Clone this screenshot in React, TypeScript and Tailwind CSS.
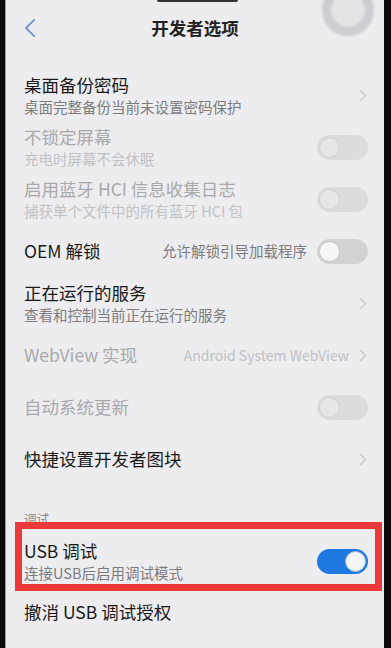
const font = { fontFamily: '"Noto Sans CJK SC", "Noto Sans", sans-serif' }

type Row = {
  title: string
  sub?: string
  right?: string
  kind: "chevron" | "toggle" | "none"
  disabled?: boolean
  on?: boolean
}

const rows: Row[] = [
  { title: "桌面备份密码", sub: "桌面完整备份当前未设置密码保护", kind: "chevron" },
  { title: "不锁定屏幕", sub: "充电时屏幕不会休眠", kind: "toggle", disabled: true },
  { title: "启用蓝牙 HCI 信息收集日志", sub: "捕获单个文件中的所有蓝牙 HCI 包", kind: "toggle", disabled: true },
  { title: "OEM 解锁", right: "允许解锁引导加载程序", kind: "toggle" },
  { title: "正在运行的服务", sub: "查看和控制当前正在运行的服务", kind: "chevron" },
  { title: "WebView 实现", right: "Android System WebView", kind: "chevron", disabled: true },
  { title: "自动系统更新", kind: "toggle", disabled: true },
  { title: "快捷设置开发者图块", kind: "chevron" },
]

function Chevron() {
  return (
    <svg width="8" height="13" viewBox="0 0 8 13" className="shrink-0">
      <path d="M1.5 1.5 L6.5 6.5 L1.5 11.5" fill="none" stroke="#c9c9cc" strokeWidth="1.4" strokeLinecap="round" strokeLinejoin="round" />
    </svg>
  )
}

function Toggle({ on, disabled }: { on?: boolean; disabled?: boolean }) {
  if (on) {
    return (
      <div className="w-[51px] h-[25px] rounded-full bg-[#1f78e0] flex items-center justify-end pr-[2px] shrink-0">
        <div className="w-[21px] h-[21px] rounded-full bg-[#f4f5f7] border border-[#9fb6d3]" />
      </div>
    )
  }
  return (
    <div className={`w-[51px] h-[25px] rounded-full flex items-center pl-[2px] shrink-0 ${disabled ? "bg-[#dcdcdf]" : "bg-[#d3d3d6]"}`}>
      <div className={`w-[21px] h-[21px] rounded-full border ${disabled ? "bg-[#e6e6e8] border-[#d0d0d3]" : "bg-[#f7f7f8] border-[#c4c4c8]"}`} />
    </div>
  )
}

function SettingRow({ row }: { row: Row }) {
  const titleColor = row.disabled ? "text-[#a9a9ac]" : "text-[#1a1a1a]"
  const subColor = row.disabled ? "text-[#c2c2c5]" : "text-[#7c7c7f]"
  return (
    <div className="h-[52px] flex items-center pl-[18px] pr-[16px]">
      <div className="flex-1 flex flex-col min-w-0">
        <div className={`text-[17.5px] leading-[22px] ${titleColor}`}>{row.title}</div>
        {row.sub && <div className={`text-[14.5px] leading-[21px] ${subColor}`}>{row.sub}</div>}
      </div>
      {row.right && (
        <div className={`mr-[10px] ${row.disabled ? "text-[14px] text-[#c0c0c3]" : "text-[14.5px] text-[#7c7c7f]"}`}>{row.right}</div>
      )}
      {row.kind === "chevron" && <div className="pr-[1px]"><Chevron /></div>}
      {row.kind === "toggle" && <Toggle disabled={row.disabled} on={row.on} />}
    </div>
  )
}

export default function App() {
  return (
    <div className="w-[391px] h-[648px] bg-[#0b0b0d] flex overflow-hidden" style={font}>
      <div className="ml-[5px] w-[379px] h-full bg-[#ededef] relative border-l border-[#9a9a9e]">
        <div className="absolute left-[151px] top-0 w-[81px] h-[2px] rounded-b bg-[#333]" />
        <div className="absolute left-[316px] top-[-16px] w-[52px] h-[52px] rounded-full border-[9px] border-[#cdcdd1] bg-[#e4e4e7] blur-[1px]" />

        <div className="h-[56px] flex items-center px-[17px] relative">
          <svg width="14" height="20" viewBox="0 0 14 20">
            <path d="M11 2 L3 10 L11 18" fill="none" stroke="#7b94c8" strokeWidth="1.8" strokeLinecap="round" strokeLinejoin="round" />
          </svg>
          <div className="absolute left-0 right-0 text-center text-[17.5px] font-bold text-[#222] pointer-events-none">开发者选项</div>
        </div>

        <div className="pt-[13px]">
          {rows.map((r) => (
            <SettingRow key={r.title} row={r} />
          ))}
        </div>

        <div className="h-[50px] pl-[18px] pt-[26px] text-[12.5px] leading-[16px] text-[#8a8a8d]">调试</div>

        <div className="relative">
          <div className="h-[52px] flex items-center pl-[18px] pr-[16px]">
            <div className="flex-1 flex flex-col">
              <div className="text-[17.5px] leading-[22px] text-[#1a1a1a]">USB 调试</div>
              <div className="text-[14.5px] leading-[21px] text-[#7c7c7f]">连接USB后启用调试模式</div>
            </div>
            <Toggle on />
          </div>
          <div className="absolute left-[9px] right-[2px] top-[-13px] h-[69px] border-[7px] border-[#ec3a3a]" />
        </div>

        <div className="h-[50px] flex items-center pl-[18px] pr-[16px]">
          <div className="text-[17.5px] leading-[22px] text-[#1a1a1a]">撤消 USB 调试授权</div>
        </div>
      </div>
    </div>
  )
}
